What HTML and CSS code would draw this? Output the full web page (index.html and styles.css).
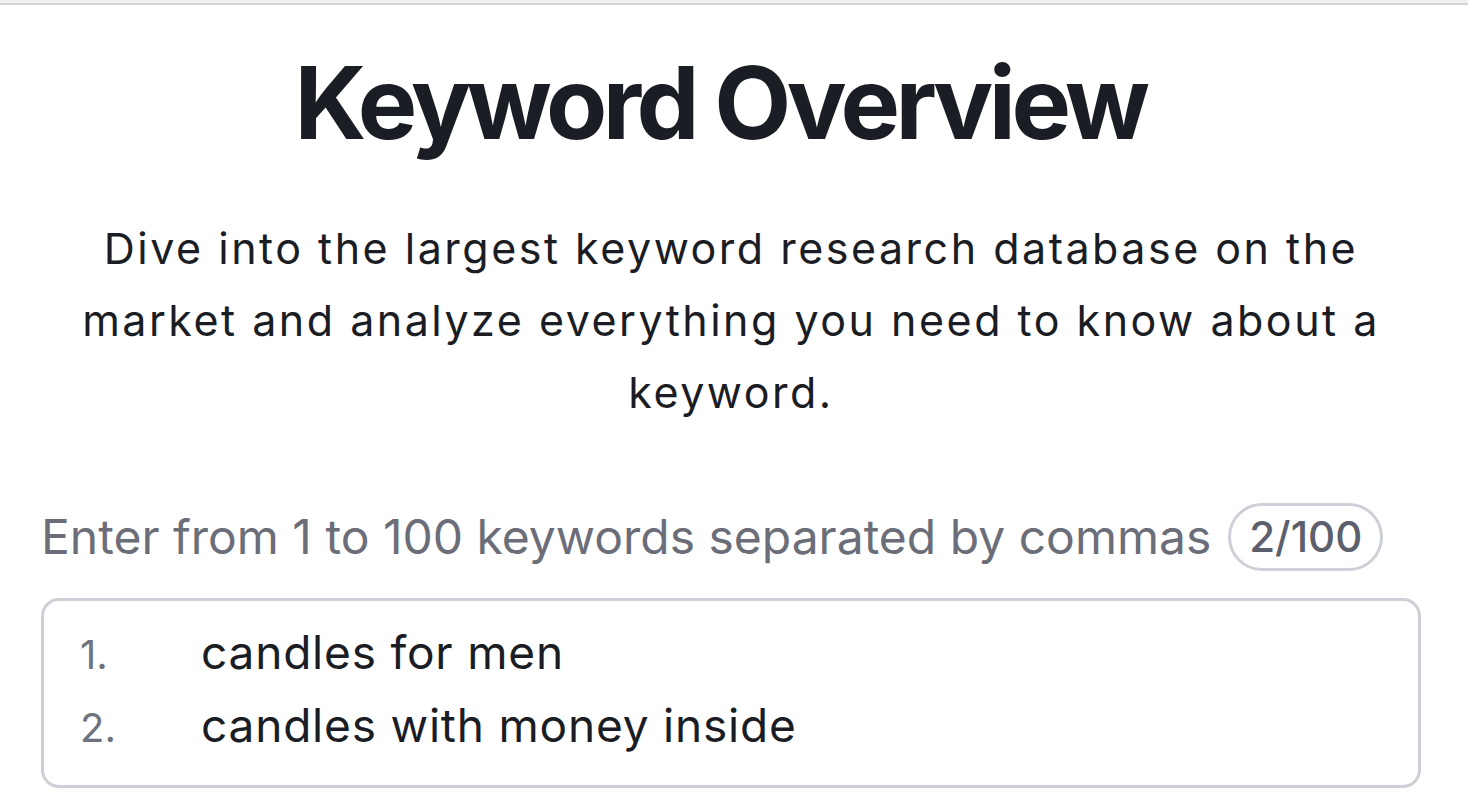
FILE: index.html
```html
<!DOCTYPE html>
<html lang="en">
<head>
  <meta charset="UTF-8">
  <title>Keyword Overview</title>
  <link rel="stylesheet" href="styles.css">
</head>
<body>
  <div class="topbar"></div>

  <main class="page">
    <h1 class="title">Keyword Overview</h1>

    <p class="intro">
      Dive into the largest keyword research database on the
      market and analyze everything you need to know about a
      keyword.
    </p>

    <div class="field-label">
      <span>Enter from 1 to 100 keywords separated by commas</span>
      <span class="counter">2/100</span>
    </div>

    <!-- keyword list box -->
    <ol class="keywords">
      <li><span class="num">1.</span><span>candles for men</span></li>
      <li><span class="num">2.</span><span>candles with money inside</span></li>
    </ol>
  </main>
</body>
</html>
```

FILE: styles.css
```css
body {
  margin: 0;
  background: #fff;
  font-family: Inter, "Noto Sans", sans-serif;
  color: #1b1d24;
}
.topbar {
  height: 3px;
  background: #eef0ee;
  border-bottom: 2px solid #d3d5d3;
}
.page {
  padding: 0 47px 0 41px;
}
.title {
  margin: 38px 0 0;
  padding-right: 22px;
  font-size: 100px;
  line-height: 120px;
  font-weight: 700;
  letter-spacing: -4.5px;
  text-align: center;
}
.intro {
  margin: 49px 0 0;
  font-size: 43px;
  line-height: 72px;
  letter-spacing: 2.5px;
  text-align: center;
}
.field-label {
  display: flex;
  align-items: center;
  gap: 17px;
  margin-top: 75px;
  height: 67px;
  font-size: 48px;
  line-height: 58px;
  color: #6b6e79;
}
.counter {
  box-sizing: border-box;
  display: flex;
  align-items: center;
  justify-content: center;
  width: 155px;
  height: 68px;
  border: 3px solid #cdd0d6;
  border-radius: 34px;
  font-size: 42px;
  font-weight: 500;
  color: #5c606c;
}
.keywords {
  box-sizing: border-box;
  list-style: none;
  margin: 28px 0 0;
  height: 190px;
  padding: 16px 36px 0;
  border: 3px solid #cdd0d6;
  border-radius: 18px;
}
.keywords li {
  display: grid;
  grid-template-columns: 121px 1fr;
  align-items: baseline;
  font-size: 46px;
  line-height: 71px;
  letter-spacing: 0.8px;
}
.num {
  font-size: 40px;
  letter-spacing: 0;
  color: #6f737d;
}
```
